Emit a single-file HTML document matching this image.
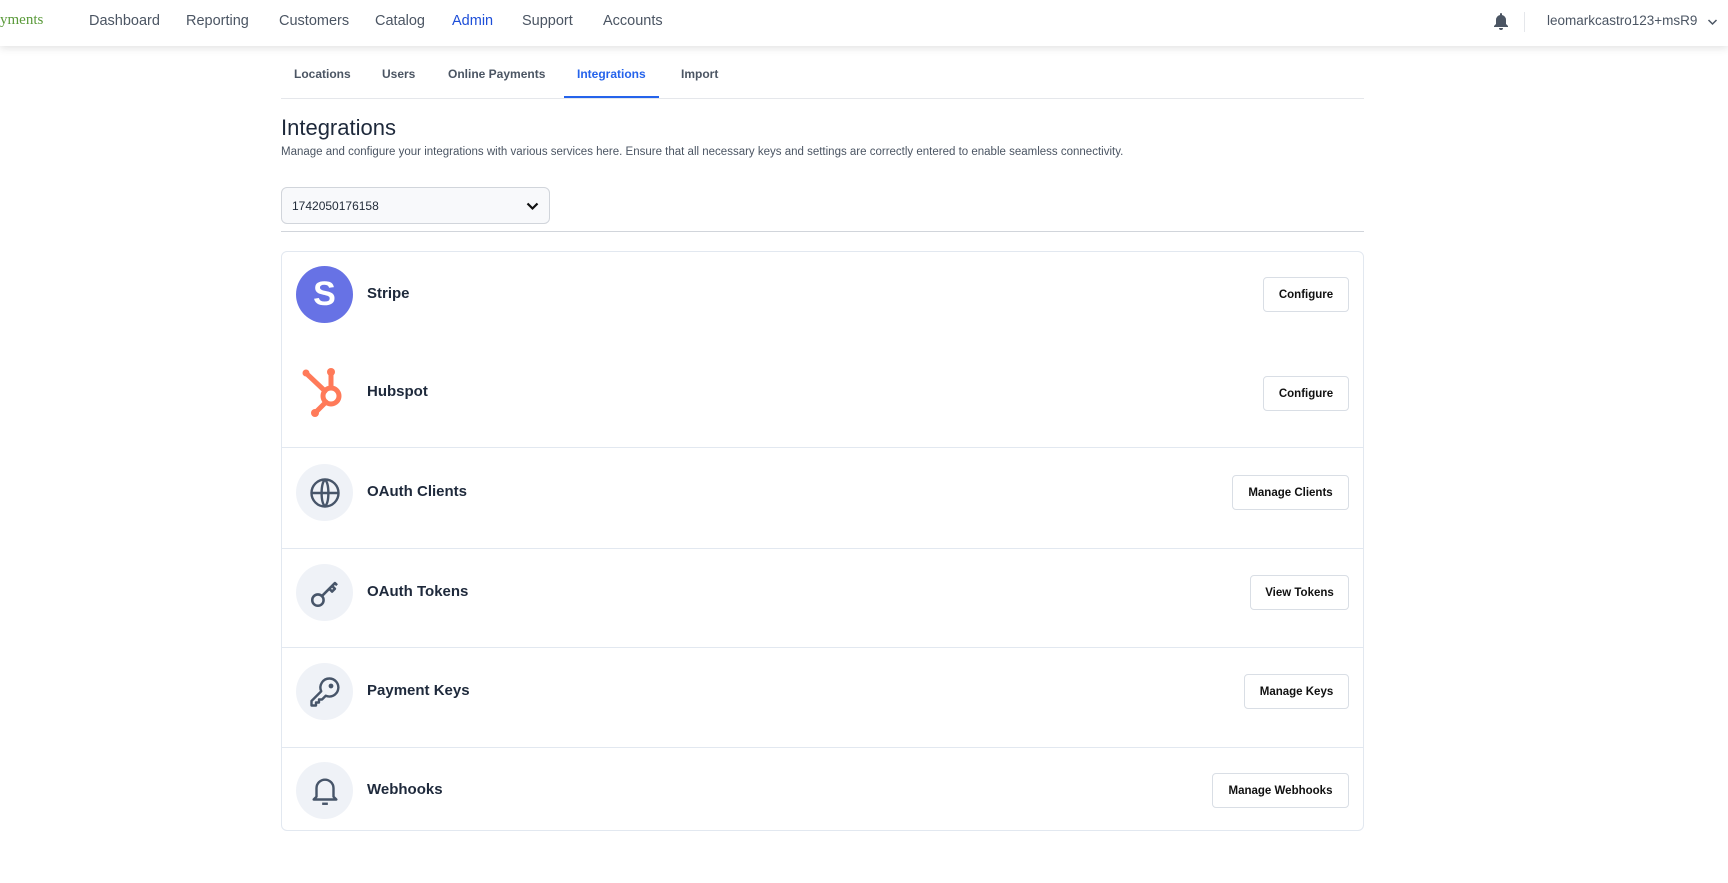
<!DOCTYPE html>
<html><head><meta charset="utf-8"><style>
*{box-sizing:border-box;margin:0;padding:0}
body{width:1728px;height:883px;background:#fff;font-family:"Segoe UI","Liberation Sans",sans-serif;color:#1f2937;position:relative;overflow:hidden}
.nav{position:absolute;left:0;top:0;width:1728px;height:46px;background:#fff;box-shadow:0 2px 8px rgba(0,0,0,.12)}
.nav span{position:absolute;top:13px;font-size:14.5px;color:#4b5563}
.abs{position:absolute}
.tab{position:absolute;top:67px;font-size:12px;font-weight:600;color:#4b5563}
.card{position:absolute;left:281px;top:251px;width:1083px;height:580px;border:1px solid #e2e8f0;border-radius:6px}
.row{position:absolute;left:0;width:1081px}
.ic{position:absolute;left:14px;width:57px;height:57px;border-radius:50%;background:#eff2f7;display:flex;align-items:center;justify-content:center}
.lbl{position:absolute;left:85px;font-size:15px;font-weight:600;color:#1e293b}
.btn{position:absolute;right:14px;height:35px;border:1px solid #d9dee5;border-radius:4px;background:#fff;font-size:11.5px;font-weight:700;color:#111;display:flex;align-items:center;justify-content:center}
.div{position:absolute;left:0;width:1081px;height:1px;background:#e2e8f0}
</style></head><body>
<div class="nav">
<span style="left:0;top:12px;font-family:'Liberation Serif',serif;color:#5a9a3a;font-size:15px">yments</span>
<span style="left:89px">Dashboard</span>
<span style="left:186px">Reporting</span>
<span style="left:279px">Customers</span>
<span style="left:375px">Catalog</span>
<span style="left:452px;color:#1d4ed8">Admin</span>
<span style="left:522px">Support</span>
<span style="left:603px">Accounts</span>
<svg class="abs" style="left:1493px;top:12px" width="16" height="18" viewBox="0 0 16 18"><path d="M8 1a1 1 0 0 1 1 1v1a5 5 0 0 1 4 5v4l2 2v1H1v-1l2-2V8a5 5 0 0 1 4-5V2a1 1 0 0 1 1-1z" fill="#4b5563"/><path d="M6 16h4a2 2 0 0 1-4 0z" fill="#4b5563"/></svg>
<div class="abs" style="left:1524px;top:12px;width:1px;height:20px;background:#e5e7eb"></div>
<span style="left:1547px;font-size:13.5px">leomarkcastro123+msR9</span>
<svg class="abs" style="left:1707px;top:18px" width="11" height="8" viewBox="0 0 11 8"><path d="M1.5 2l4 4 4-4" stroke="#4b5563" stroke-width="1.5" fill="none"/></svg>
</div>

<div class="tab" style="left:294px">Locations</div>
<div class="tab" style="left:382px">Users</div>
<div class="tab" style="left:448px">Online Payments</div>
<div class="tab" style="left:577px;color:#2563eb">Integrations</div>
<div class="tab" style="left:681px">Import</div>
<div class="abs" style="left:281px;top:98px;width:1083px;height:1px;background:#e5e7eb"></div>
<div class="abs" style="left:564px;top:96px;width:95px;height:2px;background:#2563eb"></div>

<div class="abs" style="left:281px;top:115px;font-size:22px;font-weight:500;color:#1e293b">Integrations</div>
<div class="abs" style="left:281px;top:146px;font-size:11.5px;color:#4b5563">Manage and configure your integrations with various services here. Ensure that all necessary keys and settings are correctly entered to enable seamless connectivity.</div>
<div class="abs" style="left:281px;top:187px;width:269px;height:37px;background:#f8f9fb;border:1px solid #d1d5db;border-radius:6px;font-size:12px;color:#1f2937;padding:11px 10px">1742050176158
<svg class="abs" style="right:10px;top:14px" width="13" height="9" viewBox="0 0 13 9"><path d="M1.5 1.5l5 5 5-5" stroke="#111" stroke-width="2.2" fill="none"/></svg></div>
<div class="abs" style="left:281px;top:231px;width:1083px;height:1px;background:#d1d5db"></div>

<div class="card">
<div class="row" style="top:14px">
 <div class="ic" style="background:#6772e5;font-family:'Liberation Sans',sans-serif;font-weight:900;font-size:34px;color:#fff">S</div>
 <div class="lbl" style="top:19px">Stripe</div>
 <div class="btn" style="top:11px;width:86px">Configure</div>
</div>
<div class="row" style="top:112px">
 <div class="ic" style="background:#fff">
  <svg width="50" height="54" viewBox="0 0 50 54"><g stroke="#ff7a59" stroke-width="5" stroke-linecap="round" fill="none"><circle cx="31" cy="30" r="8"/><line x1="31" y1="22" x2="31" y2="8"/><line x1="25" y1="25" x2="8" y2="9"/><line x1="26" y1="36" x2="16" y2="46"/></g><circle cx="31" cy="6" r="4" fill="#ff7a59"/><circle cx="6" cy="7" r="3.5" fill="#ff7a59"/><circle cx="15" cy="47" r="4" fill="#ff7a59"/></svg>
 </div>
 <div class="lbl" style="top:19px">Hubspot</div>
 <div class="btn" style="top:12px;width:86px">Configure</div>
</div>
<div class="div" style="top:195px"></div>
<div class="row" style="top:212px">
 <div class="ic"><svg width="36" height="36" viewBox="0 0 24 24" fill="none" stroke="#475569" stroke-width="1.6"><circle cx="12" cy="12" r="9"/><path d="M3 12h18M12 3c3 3 3 15 0 18M12 3c-3 3-3 15 0 18"/></svg></div>
 <div class="lbl" style="top:19px">OAuth Clients</div>
 <div class="btn" style="top:11px;width:117px">Manage Clients</div>
</div>
<div class="div" style="top:296px"></div>
<div class="row" style="top:312px">
 <div class="ic"><svg width="34" height="34" viewBox="0 0 24 24" fill="none" stroke="#475569" stroke-width="1.8" stroke-linejoin="round"><circle cx="7" cy="17" r="4"/><path d="M10 14l9-9M15 9l2 2 2-2-2-2M17 7l2-2 1.5 1.5"/></svg></div>
 <div class="lbl" style="top:19px">OAuth Tokens</div>
 <div class="btn" style="top:11px;width:99px">View Tokens</div>
</div>
<div class="div" style="top:395px"></div>
<div class="row" style="top:411px">
 <div class="ic"><svg width="36" height="36" viewBox="0 0 24 24" fill="none" stroke="#475569" stroke-width="1.6" stroke-linejoin="round"><path d="M15 3a6 6 0 1 1-2.5 11.5L10 17H8v2H6v2H3v-3l6.5-6.5A6 6 0 0 1 15 3z"/><circle cx="16" cy="8" r="0.8" fill="#475569"/></svg></div>
 <div class="lbl" style="top:19px">Payment Keys</div>
 <div class="btn" style="top:11px;width:105px">Manage Keys</div>
</div>
<div class="div" style="top:495px"></div>
<div class="row" style="top:510px">
 <div class="ic"><svg width="34" height="34" viewBox="0 0 24 24" fill="none" stroke="#475569" stroke-width="1.7" stroke-linejoin="round"><path d="M6 16V10a6 6 0 0 1 12 0v6l2 2H4z"/><path d="M10 21h4"/></svg></div>
 <div class="lbl" style="top:19px">Webhooks</div>
 <div class="btn" style="top:11px;width:137px">Manage Webhooks</div>
</div>
</div>
</body></html>
